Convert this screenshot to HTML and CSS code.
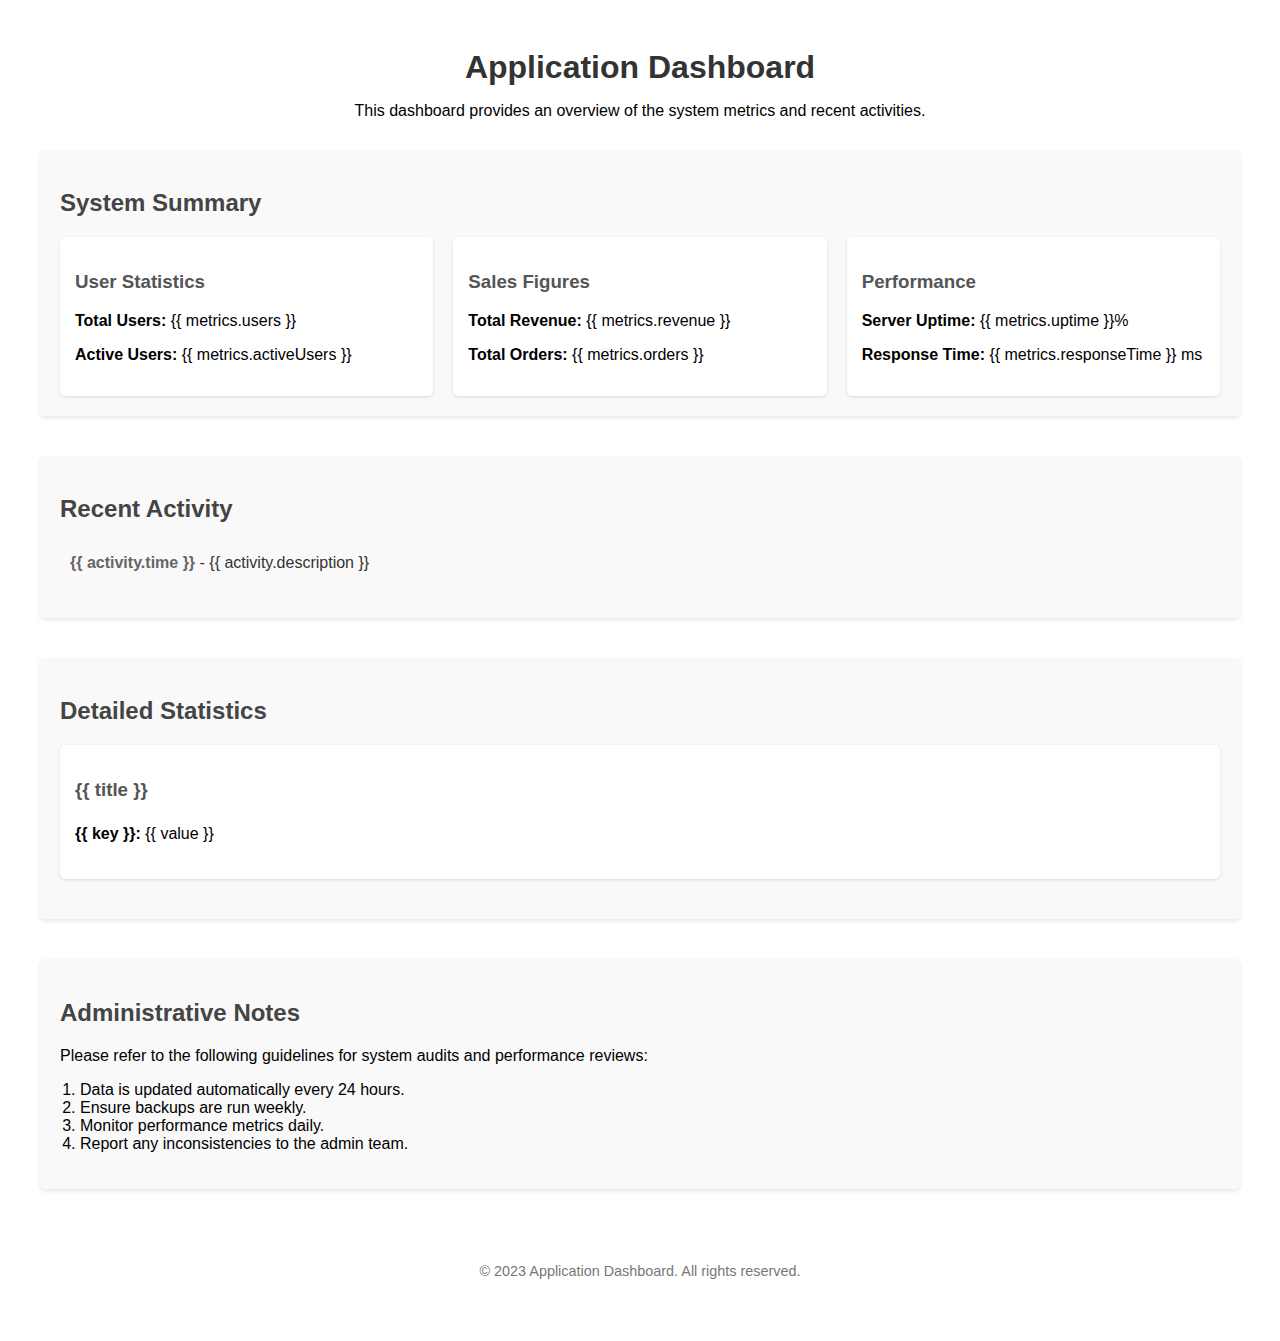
FILE: index.html
```html
<!DOCTYPE html>
<html lang="en">
<head>
<meta charset="utf-8">
<title>Application Dashboard</title>
<link rel="stylesheet" href="styles.css">
</head>
<body>
<div class="container">
  <header class="header">
    <h1 class="title">Application Dashboard</h1>
    <p class="lead">This dashboard provides an overview of the system metrics and recent activities.</p>
  </header>
  <main class="main">
    <section class="section">
      <h2 class="section-title">System Summary</h2>
      <div class="card-grid">
        <div class="card">
          <h3 class="card-title">User Statistics</h3>
          <p class="stat"><strong>Total Users:</strong> {{ metrics.users }}</p>
          <p class="stat"><strong>Active Users:</strong> {{ metrics.activeUsers }}</p>
        </div>
        <div class="card">
          <h3 class="card-title">Sales Figures</h3>
          <p class="stat"><strong>Total Revenue:</strong> {{ metrics.revenue }}</p>
          <p class="stat"><strong>Total Orders:</strong> {{ metrics.orders }}</p>
        </div>
        <div class="card">
          <h3 class="card-title">Performance</h3>
          <p class="stat"><strong>Server Uptime:</strong> {{ metrics.uptime }}%</p>
          <p class="stat"><strong>Response Time:</strong> {{ metrics.responseTime }} ms</p>
        </div>
      </div>
    </section>

    <section class="section">
      <h2 class="section-title">Recent Activity</h2>
      <ul class="activity-list">
        <li class="activity-item"><span class="activity-time">{{ activity.time }}</span> - <span class="activity-desc">{{ activity.description }}</span></li>
      </ul>
    </section>

    <section class="section">
      <h2 class="section-title">Detailed Statistics</h2>
      <div class="card card-single">
        <h3 class="card-title">{{ title }}</h3>
        <ul class="kv-list">
          <li class="kv-item"><strong>{{ key }}:</strong> {{ value }}</li>
        </ul>
      </div>
    </section>

    <section class="section">
      <h2 class="section-title section-title-notes">Administrative Notes</h2>
      <p class="note">Please refer to the following guidelines for system audits and performance reviews:</p>
      <ol class="guidelines">
        <li>Data is updated automatically every 24 hours.</li>
        <li>Ensure backups are run weekly.</li>
        <li>Monitor performance metrics daily.</li>
        <li>Report any inconsistencies to the admin team.</li>
      </ol>
    </section>
  </main>
  <footer class="footer">
    <p class="footer-text">&copy; 2023 Application Dashboard. All rights reserved.</p>
  </footer>
</div>
</body>
</html>
```

FILE: styles.css
```css
html, body {
  margin: 0;
  padding: 0;
}

body {
  font-family: "Liberation Sans", Arial, Helvetica, sans-serif;
  font-size: 16px;
  color: #000;
  background: #fff;
}

.container {
  max-width: 1200px;
  margin: 0 auto;
  padding: 0 0 21px;
}

.header {
  text-align: center;
  padding: 49px 0 0;
  margin-bottom: 30px;
}

.title {
  font-size: 32px;
  font-weight: bold;
  color: #333;
  margin: 0;
  line-height: 37px;
}

.lead {
  margin: 16px 0 0;
  line-height: 18px;
}

.main {
  display: flex;
  flex-direction: column;
  gap: 40px;
}

.section {
  background: #f9f9f9;
  border-radius: 5px;
  box-shadow: 0 2px 4px rgba(0, 0, 0, 0.1);
  padding: 20px;
}

.section-title {
  font-size: 24px;
  font-weight: bold;
  color: #444;
  margin: 19px 0 20px;
  line-height: 28px;
}

.section-title-notes {
  margin-top: 20px;
}

.card-grid {
  display: grid;
  grid-template-columns: repeat(3, 1fr);
  gap: 20px;
}

.card {
  background: #fff;
  border-radius: 5px;
  box-shadow: 0 1px 3px rgba(0, 0, 0, 0.12);
  padding: 15px;
}

.card-single {
  margin-bottom: 20px;
  padding-bottom: 14px;
}

.card-title {
  font-size: 18.72px;
  font-weight: bold;
  color: #555;
  margin: 18.72px 0 19.72px;
  line-height: 21.5px;
}

.stat {
  margin: 16px 0;
  line-height: 18.4px;
}

.card-title + .stat {
  margin-top: 0;
}

.activity-list {
  list-style: none;
  padding: 0;
  margin: 0 0 16px;
}

.activity-item {
  padding: 11px 10px 10px;
  line-height: 18.4px;
  color: #333;
}

.activity-time {
  font-weight: bold;
  color: #666;
}

.activity-desc {
  color: #333;
}

.kv-list {
  list-style: none;
  padding: 0;
  margin: 0 0 16px;
}

.kv-item {
  padding: 5px 0;
  line-height: 18.4px;
}

.note {
  margin: 0 0 16px;
  line-height: 18.4px;
}

.guidelines {
  margin: 0 0 16px;
  padding-left: 20px;
  line-height: 18px;
}

.footer {
  margin-top: 54px;
  padding: 20px 0;
  text-align: center;
}

.footer-text {
  margin: 0;
  font-size: 14.4px;
  color: #777;
  line-height: 16.5px;
}
```
